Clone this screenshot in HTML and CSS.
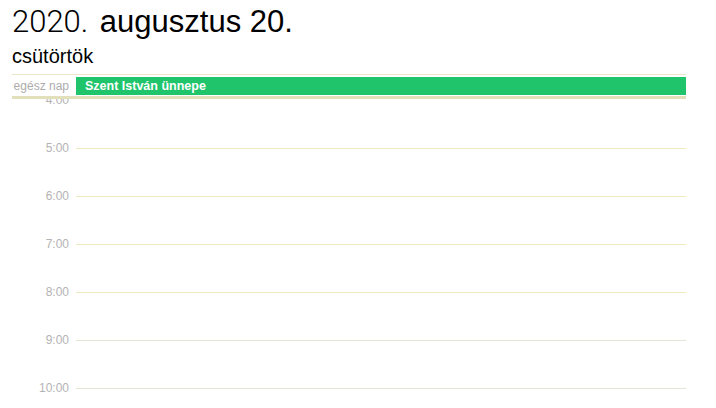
FILE: index.html
```html
<!DOCTYPE html>
<html lang="hu">
<head>
<meta charset="utf-8">
<link rel="stylesheet" href="styles.css">
</head>
<body>
<header class="head">
  <h1 class="title"><span class="year">2020.</span> augusztus 20.</h1>
  <div class="weekday">csütörtök</div>
</header>
<section class="allday">
  <div class="allday-label">egész nap</div>
  <div class="event">Szent István ünnepe</div>
</section>
<section class="hours">
  <div class="hours-inner">
    <div class="hour hidden-line"><span class="hl">4:00</span><span class="line"></span></div>
    <div class="hour warm"><span class="hl">5:00</span><span class="line"></span></div>
    <div class="hour warm"><span class="hl">6:00</span><span class="line"></span></div>
    <div class="hour warm"><span class="hl">7:00</span><span class="line"></span></div>
    <div class="hour warm"><span class="hl">8:00</span><span class="line"></span></div>
    <div class="hour cool"><span class="hl">9:00</span><span class="line"></span></div>
    <div class="hour cool"><span class="hl">10:00</span><span class="line"></span></div>
  </div>
</section>
</body>
</html>
```
FILE: styles.css
```css
html, body {
  margin: 0;
  padding: 0;
  background: #ffffff;
}
body {
  width: 716px;
  height: 408px;
  overflow: hidden;
  font-family: "Liberation Sans", Arial, sans-serif;
  color: #000;
}
.head {
  padding: 4px 12px 0 12px;
}
.title {
  margin: 0;
  font-size: 31px;
  line-height: 36px;
  font-weight: 400;
}
.year {
  font-family: Roboto, "Liberation Sans", sans-serif;
  font-weight: 300;
  margin-right: 3px;
}
.weekday {
  margin-top: 5px;
  font-size: 20px;
  line-height: 22px;
  padding-bottom: 7px;
}
.allday {
  margin: 0 30px 0 12px;
  border-top: 1px solid #ece6c8;
  border-bottom: 3px solid #e2dfbb;
  display: flex;
  align-items: center;
  padding: 2px 0 1px 0;
}
.allday-label {
  width: 57px;
  padding-right: 7px;
  text-align: right;
  font-size: 12px;
  font-weight: 400;
  color: #acacac;
  white-space: nowrap;
}
.event {
  flex: 1;
  height: 18px;
  line-height: 18px;
  background: #1fc46b;
  color: #fff;
  font-size: 12.5px;
  font-weight: 700;
  padding-left: 9px;
}
.hours {
  margin: 0 30px 0 12px;
  height: 308px;
  overflow: hidden;
}
.hours-inner {
  margin-top: -5px;
  display: flex;
  flex-direction: column;
  gap: 36px;
}
.hour {
  height: 12px;
  display: flex;
  align-items: center;
}
.hl {
  width: 57px;
  padding-right: 7px;
  text-align: right;
  font-size: 12px;
  color: #b3b3b3;
}
.line {
  flex: 1;
  height: 1px;
}
.hidden-line .line {
  background: transparent;
}
.warm .line {
  background: #f0eac0;
}
.cool .line {
  background: #e5e5d4;
}
```
